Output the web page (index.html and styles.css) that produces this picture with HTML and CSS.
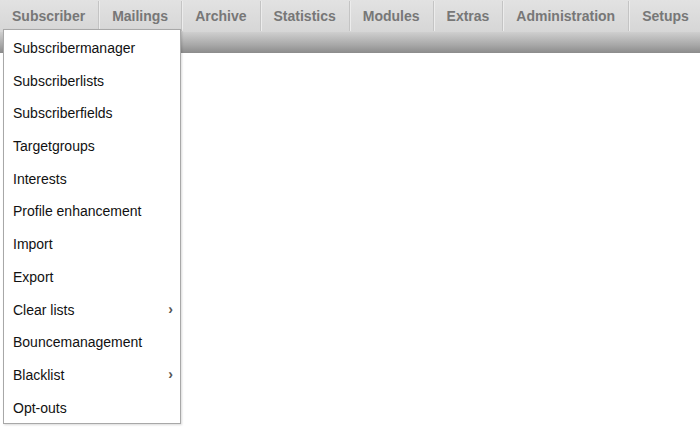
FILE: index.html
```html
<!DOCTYPE html>
<html>
<head>
<meta charset="utf-8">
<link rel="stylesheet" href="styles.css">
</head>
<body>
<div class="page">
  <nav class="topbar">
    <div class="tab active">Subscriber
      <ul class="menu">
        <li>Subscribermanager</li>
        <li>Subscriberlists</li>
        <li>Subscriberfields</li>
        <li>Targetgroups</li>
        <li>Interests</li>
        <li>Profile enhancement</li>
        <li>Import</li>
        <li>Export</li>
        <li class="sub">Clear lists<span class="arrow">›</span></li>
        <li>Bouncemanagement</li>
        <li class="sub">Blacklist<span class="arrow">›</span></li>
        <li>Opt-outs</li>
      </ul>
    </div>
    <div class="tab">Mailings</div>
    <div class="tab">Archive</div>
    <div class="tab">Statistics</div>
    <div class="tab">Modules</div>
    <div class="tab">Extras</div>
    <div class="tab">Administration</div>
    <div class="tab last">Setups</div>
  </nav>
  <div class="subbar"></div>
</div>
</body>
</html>
```

FILE: styles.css
```css
html, body {
  margin: 0;
  padding: 0;
  background: #fff;
}
.page {
  width: 700px;
  height: 440px;
  overflow: hidden;
  font-family: "Liberation Sans", Arial, sans-serif;
}
.topbar {
  display: flex;
  height: 32px;
  background: linear-gradient(#e2e2e2, #d6d6d6);
  position: relative;
  z-index: 2;
}
.tab {
  position: relative;
  padding: 0 13px 0 12px;
  line-height: 30px;
  font-size: 14px;
  font-weight: bold;
  color: #777;
  border-right: 1px solid #c4c4c4;
  box-shadow: 1px 0 0 #ececec;
  height: 30px;
  margin-top: 1px;
}
.tab + .tab {
  padding-left: 13px;
}
.tab.last {
  border-right: none;
  box-shadow: none;
}
.subbar {
  height: 21px;
  background: linear-gradient(#cfcfcf, #a9a9a9 60%, #8c8c8c);
}
.menu {
  position: absolute;
  left: 3px;
  top: 28px;
  width: 176px;
  margin: 0;
  padding: 1px 0 0;
  list-style: none;
  background: #fff;
  border: 1px solid #a8a8a8;
  box-shadow: 1px 1px 2px rgba(0,0,0,0.15);
  z-index: 5;
}
.menu li {
  position: relative;
  height: 32.7px;
  line-height: 34px;
  padding-left: 9px;
  font-size: 14px;
  font-weight: normal;
  color: #111;
}
.arrow {
  position: absolute;
  right: 7px;
  top: -1px;
  color: #555;
  font-size: 14px;
  font-weight: bold;
}
```
